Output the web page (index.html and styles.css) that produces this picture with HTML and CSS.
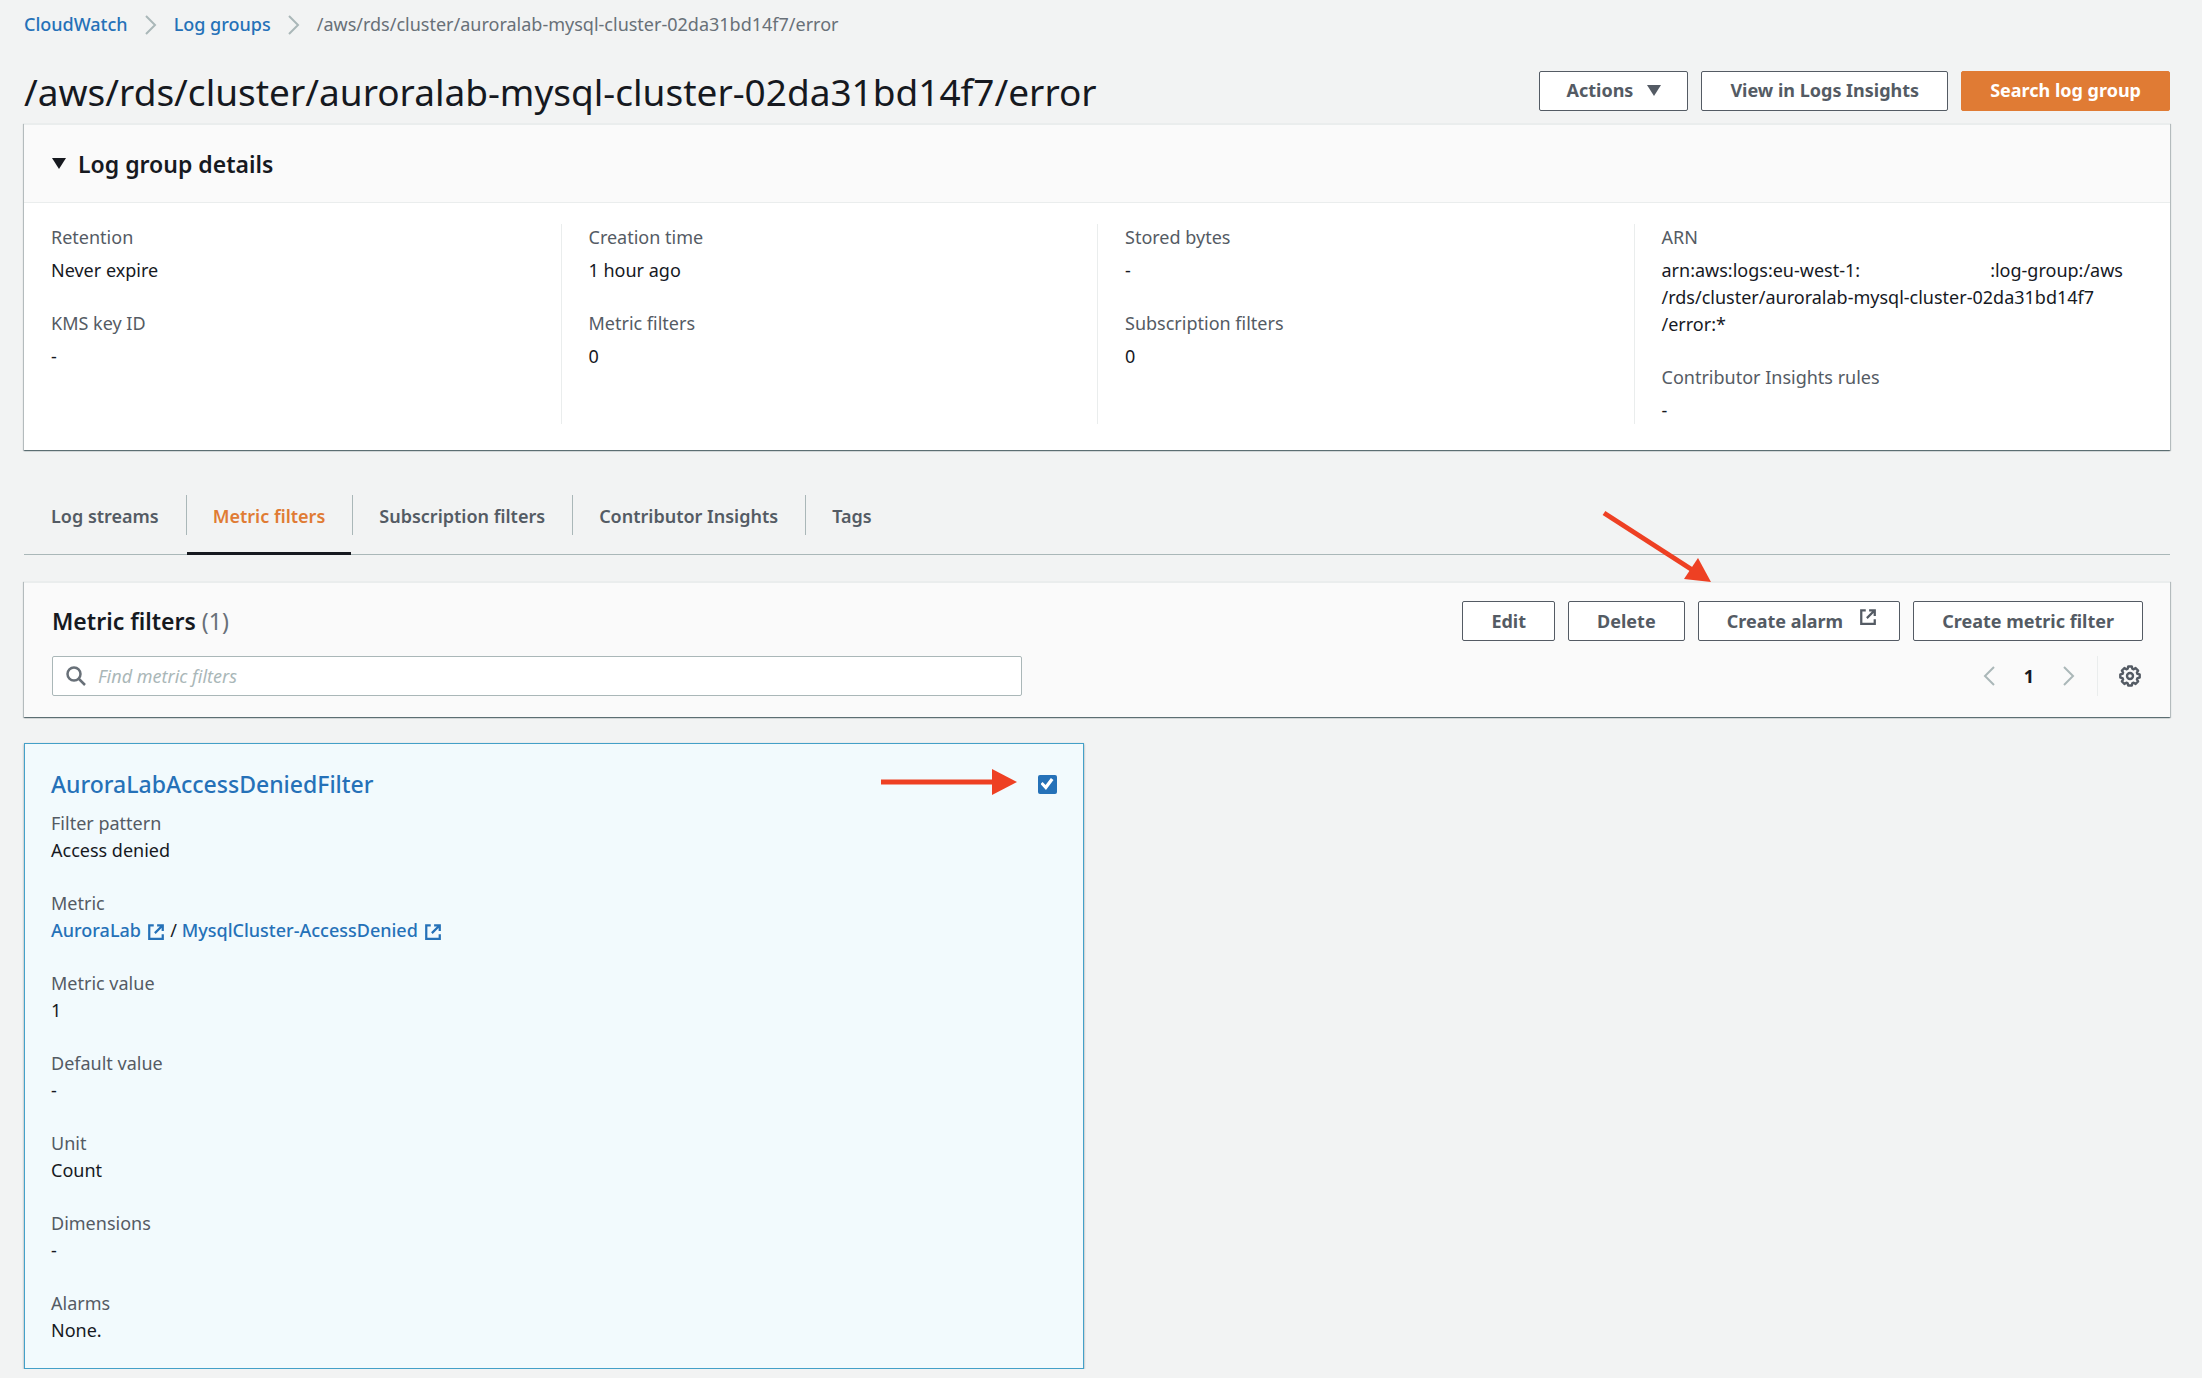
FILE: index.html
```html
<!DOCTYPE html>
<html lang="en">
<head>
<meta charset="utf-8">
<meta name="viewport" content="width=device-width, initial-scale=1">
<title>CloudWatch - Log group</title>
<link rel="stylesheet" href="styles.css">
</head>
<body>
<svg class="sprite" aria-hidden="true">
  <symbol id="external" viewBox="0 0 16 16"><path d="M6 2H2v12h12v-4M9 2h5v5M14 2L7 9" fill="none" stroke="currentColor" stroke-width="2"/></symbol>
  <symbol id="chevron" viewBox="0 0 12 20"><path d="M1 1l9 9-9 9" fill="none" stroke="currentColor" stroke-width="2"/></symbol>
  <symbol id="caret" viewBox="0 0 14 11"><path d="M0 0h14L7 11z" fill="currentColor"/></symbol>
</svg>

<nav class="breadcrumb" aria-label="Breadcrumb">
  <a href="#">CloudWatch</a>
  <svg class="chevron"><use href="#chevron"/></svg>
  <a href="#">Log groups</a>
  <svg class="chevron"><use href="#chevron"/></svg>
  <span>/aws/rds/cluster/auroralab-mysql-cluster-02da31bd14f7/error</span>
</nav>

<main>
  <header class="page-header">
    <h1>/aws/rds/cluster/auroralab-mysql-cluster-02da31bd14f7/error</h1>
    <div class="actions">
      <button class="btn menu" type="button">Actions <svg class="caret"><use href="#caret"/></svg></button>
      <button class="btn" type="button">View in Logs Insights</button>
      <button class="btn btn-primary" type="button">Search log group</button>
    </div>
  </header>

  <details class="panel" open>
    <summary><svg class="caret"><use href="#caret"/></svg><h2>Log group details</h2></summary>
    <div class="details-grid">
      <dl>
        <dt>Retention</dt><dd>Never expire</dd>
        <dt>KMS key ID</dt><dd>-</dd>
      </dl>
      <dl>
        <dt>Creation time</dt><dd>1 hour ago</dd>
        <dt>Metric filters</dt><dd>0</dd>
      </dl>
      <dl>
        <dt>Stored bytes</dt><dd>-</dd>
        <dt>Subscription filters</dt><dd>0</dd>
      </dl>
      <dl>
        <dt>ARN</dt><dd>arn:aws:logs:eu-west-1:<span class="account"></span>:log-group:/aws<br>/rds/cluster/auroralab-mysql-cluster-02da31bd14f7<br>/error:*</dd>
        <dt>Contributor Insights rules</dt><dd>-</dd>
      </dl>
    </div>
  </details>

  <nav class="tabs" aria-label="Log group sections">
    <a href="#">Log streams</a>
    <a href="#" class="active" aria-current="page">Metric filters</a>
    <a href="#">Subscription filters</a>
    <a href="#">Contributor Insights</a>
    <a href="#">Tags</a>
  </nav>

  <section class="panel toolbar">
    <div class="toolbar-row">
      <h2>Metric filters <span class="count">(1)</span></h2>
      <div class="actions">
        <button class="btn" type="button">Edit</button>
        <button class="btn" type="button">Delete</button>
        <div class="pointed">
          <button class="btn" type="button">Create alarm <svg class="external"><use href="#external"/></svg></button>
          <svg class="arrow-down" viewBox="0 0 110 74" aria-hidden="true"><path d="M2 3L92 61" stroke="#ee4023" stroke-width="5"/><path d="M96 48L109 72L82 69z" fill="#ee4023"/></svg>
        </div>
        <button class="btn" type="button">Create metric filter</button>
      </div>
    </div>
    <div class="toolbar-row">
      <label class="search">
        <svg viewBox="0 0 20 20" aria-hidden="true"><circle cx="8" cy="8" r="6.5" fill="none" stroke="currentColor" stroke-width="2.5"/><path d="M12.500 12.500L19 19" stroke="currentColor" stroke-width="2.500"/></svg>
        <input type="search" placeholder="Find metric filters" aria-label="Find metric filters">
      </label>
      <div class="pager">
        <button type="button" aria-label="Previous page"><svg class="chevron prev"><use href="#chevron"/></svg></button>
        <button type="button" class="current">1</button>
        <button type="button" aria-label="Next page"><svg class="chevron"><use href="#chevron"/></svg></button>
        <button type="button" class="settings" aria-label="Preferences"><svg viewBox="0 0 22 22"><path d="M9.200 1.500h3.600l.5 2.200 1.300.6 2-1.200 2.500 2.500-1.200 2 .6 1.300 2.200.500v3.200l-2.200.5-.6 1.300 1.200 2-2.500 2.500-2-1.200-1.300.6-.5 2.200H9.200l-.5-2.200-1.300-.6-2 1.200-2.500-2.500 1.200-2-.6-1.300-2.200-.5V9.400l2.200-.5.6-1.300-1.200-2 2.500-2.500 2 1.200 1.300-.6z" fill="none" stroke="currentColor" stroke-width="2.400" stroke-linejoin="round"/><circle cx="11" cy="11" r="3" fill="none" stroke="currentColor" stroke-width="2.400"/></svg></button>
      </div>
    </div>
  </section>

  <div class="cards">
    <article class="card">
      <div class="card-head">
        <h3><a href="#">AuroraLabAccessDeniedFilter</a></h3>
        <div class="pointed">
          <input type="checkbox" checked aria-label="Select AuroraLabAccessDeniedFilter">
          <svg class="arrow-right" viewBox="0 0 136 26" aria-hidden="true"><path d="M0 13h112" stroke="#ee4023" stroke-width="5"/><path d="M111 0l25 13-25 13z" fill="#ee4023"/></svg>
        </div>
      </div>
      <dl>
        <dt>Filter pattern</dt><dd>Access denied</dd>
        <dt>Metric</dt><dd><a href="#">AuroraLab <svg class="external"><use href="#external"/></svg></a> / <a href="#">MysqlCluster-AccessDenied <svg class="external"><use href="#external"/></svg></a></dd>
        <dt>Metric value</dt><dd>1</dd>
        <dt>Default value</dt><dd>-</dd>
        <dt>Unit</dt><dd>Count</dd>
        <dt>Dimensions</dt><dd>-</dd>
        <dt>Alarms</dt><dd>None.</dd>
      </dl>
    </article>
  </div>
</main>
</body>
</html>
```
FILE: styles.css
```css
* { box-sizing: border-box; }

body {
  margin: 0;
  padding: 11px 32px 0 24px;
  background: #f2f3f3;
  color: #16191f;
  font: 18px/27px "Noto Sans", "Open Sans", sans-serif;
}

h1, h2, h3, dl, dd { margin: 0; font-weight: 400; }
a { color: #2571b8; text-decoration: none; }
button, input { font: inherit; color: inherit; }
.sprite { display: none; }
.chevron { width: 12px; height: 20px; color: #aab7b8; }
.prev { transform: rotate(180deg); }
.caret { width: 14px; height: 11px; }
.external { width: 18px; height: 18px; }

.breadcrumb { display: flex; align-items: center; gap: 17px; height: 27px; color: #687078; }
.breadcrumb a { font-weight: 500; }

.page-header { display: flex; align-items: center; justify-content: space-between; height: 85px; padding-top: 22px; }
.page-header .actions { padding-bottom: 2px; }
h1 { font-size: 37px; line-height: 48px; }

.actions { display: flex; gap: 13px; }
.btn {
  display: flex;
  align-items: center;
  gap: 16px;
  height: 40px;
  padding: 0 28px;
  border: 1px solid #545b64;
  border-radius: 2px;
  background: #fff;
  color: #545b64;
  font-weight: 700;
  white-space: nowrap;
}
.menu { gap: 14px; padding: 0 26px; }
.btn-primary { border-color: #e07b34; background: #e07b34; color: #fff; }

.panel {
  border-top: 2px solid #eaeded;
  background: #fff;
  box-shadow: 0 1px 1px 0 rgba(0, 28, 36, .4), 1px 1px 1px 0 rgba(0, 28, 36, .2), -1px 1px 1px 0 rgba(0, 28, 36, .2);
}
summary { display: flex; align-items: center; gap: 12px; height: 78px; padding: 0 28px; border-bottom: 1px solid #eaeded; background: #fafafa; }
h2 { font-size: 23px; line-height: 32px; }
.panel h2 { font-weight: 600; }

.details-grid { display: grid; grid-template-columns: repeat(4, 1fr); padding: 21px 0 26px; }
.details-grid dl { padding: 0 27px; border-left: 1px solid #eaeded; }
.details-grid dl:first-child { border-left: 0; }
.details-grid dd { padding-top: 6px; }
dt { color: #545b64; }
dd + dt { margin-top: 26px; }
.account { display: inline-block; width: 130px; }

.tabs { display: flex; height: 60px; margin-top: 45px; border-bottom: 1px solid #aab7b8; }
.tabs a { display: flex; position: relative; padding: 8px 27px 0; color: #545b64; font-weight: 600; }
.tabs a + a::before { content: ""; position: absolute; left: 0; top: 0; width: 1px; height: 40px; background: #aab7b8; }
.tabs .active { color: #e07b34; }
.tabs .active::after { content: ""; position: absolute; left: 1px; right: 1px; bottom: -1px; height: 3px; background: #16191f; }

.toolbar { margin-top: 26px; padding: 18px 27px 21px 28px; background: #fafafa; }
.toolbar-row { display: flex; align-items: center; justify-content: space-between; }
.toolbar-row + .toolbar-row { margin-top: 15px; }
.count { color: #687078; font-weight: 400; }
.pointed { position: relative; display: flex; }
.arrow-down { position: absolute; right: 188px; bottom: 57px; width: 110px; height: 74px; }
.arrow-right { position: absolute; right: 40px; top: -6px; width: 136px; height: 26px; }
.toolbar .external { margin: 0 -6px 8px 0; }

.search { display: flex; align-items: center; gap: 12px; width: 970px; max-width: 60%; height: 40px; padding: 0 13px; border: 1px solid #aab7b8; border-radius: 2px; background: #fff; }
.search svg { width: 20px; height: 20px; color: #687078; }
.search input { flex: 1; border: 0; padding: 0; outline: 0; background: none; }
.search input::placeholder { color: #aab7b8; font-style: italic; }

.pager { display: flex; align-items: center; height: 40px; }
.pager button { display: flex; align-items: center; justify-content: center; width: 40px; height: 40px; padding: 0; border: 0; background: none; }
.pager .current { font-weight: 700; }
.pager .settings { justify-content: flex-end; width: 46px; margin-left: 8px; border-left: 1px solid #eaeded; color: #545b64; }
.settings svg { width: 22px; height: 22px; margin-right: 2px; }

.cards { display: grid; grid-template-columns: repeat(2, 1fr); gap: 27px; margin-top: 26px; }
.card { padding: 24px 26px; border: 1px solid #44a0c8; background: #f2fafd; box-shadow: 0 1px 2px rgba(0, 28, 36, .4); }
.card-head { display: flex; align-items: center; justify-content: space-between; margin-bottom: 10px; }
h3 { font-size: 23px; line-height: 32px; }
.card a { font-weight: 500; }
.card dd .external { margin: 0 1px; vertical-align: -4px; }

input[type="checkbox"] { appearance: none; display: grid; place-items: center; width: 19px; height: 19px; margin: 0; border-radius: 2px; background: #2571b8; }
input[type="checkbox"]:checked::before { content: ""; width: 13px; height: 12px; background: #fff; clip-path: polygon(0 50%, 16% 34%, 39% 58%, 80% 0, 100% 16%, 42% 100%); }
```
